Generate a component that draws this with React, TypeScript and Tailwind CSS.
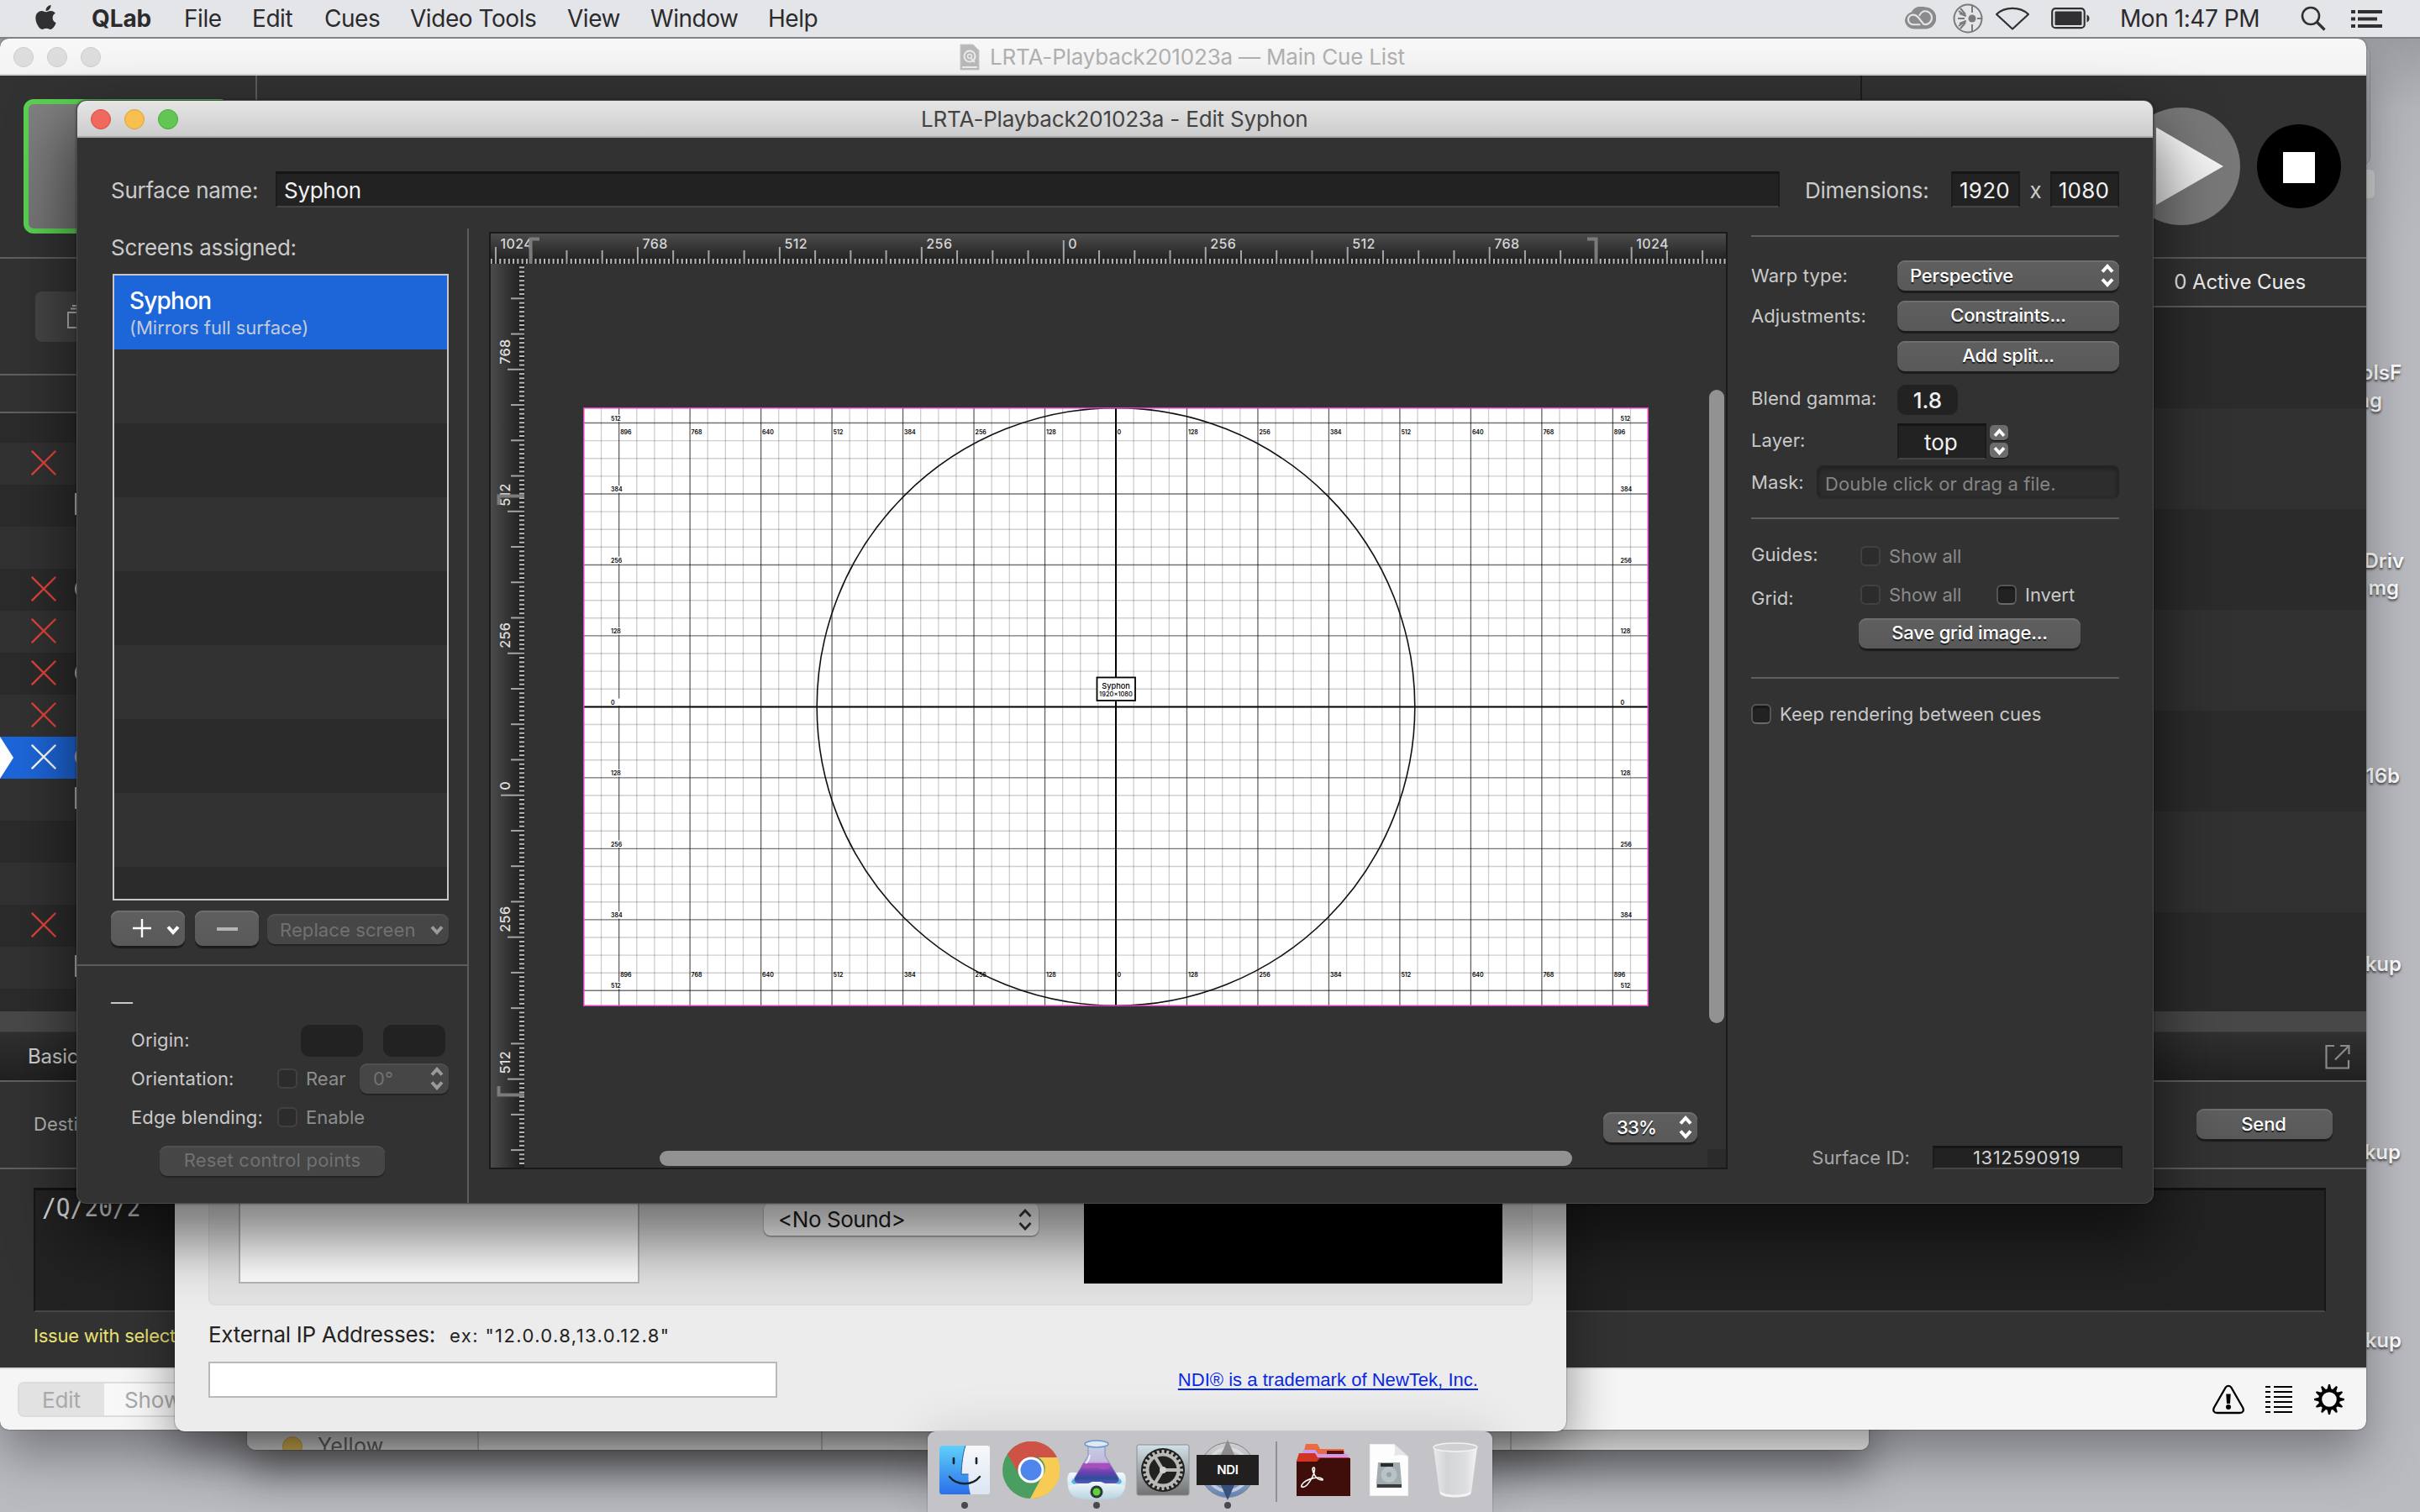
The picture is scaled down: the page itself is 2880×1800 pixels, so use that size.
import type { ReactNode } from "react";
import { FaApple } from "react-icons/fa";

const BTN =
  "flex items-center justify-center rounded-[9px] bg-gradient-to-b from-[#5f5f5f] to-[#595959] text-[22px] font-medium leading-none tracking-[-0.15px] text-white shadow-[0_3px_1px_rgba(0,0,0,0.45),inset_0_2px_0_#6e6e6e] [text-shadow:0_2px_1px_rgba(0,0,0,0.7)]";
const BTN_OFF =
  "flex items-center rounded-[9px] bg-[#464646] text-[22px] leading-none tracking-[0.1px] text-[#717171] shadow-[0_2px_1px_rgba(0,0,0,0.3),inset_0_2px_0_#505050]";
const FIELD =
  "flex items-center bg-[#222222] border-t-[3px] border-t-[#151515] border-b-2 border-b-[#454545] border-x-2 border-x-[#1b1b1b] leading-none text-[#f2f2f2]";
const LABEL = "text-[22px] leading-none tracking-[0.1px] text-[#c9c9c9] whitespace-pre";

/* ---------- small controls ---------- */

function UpDown({ color = "#ffffff" }: { color?: string }) {
  return (
    <svg viewBox="0 0 16 28" className="h-[28px] w-[16px] shrink-0" fill="none" stroke={color} strokeWidth="4">
      <path d="M2 9.500 8 3l6 6.500M2 18.500 8 25l6-6.500" />
    </svg>
  );
}

function Down({ color = "#ffffff" }: { color?: string }) {
  return (
    <svg viewBox="0 0 16 12" className="h-[12px] w-[16px] shrink-0" fill="none" stroke={color} strokeWidth="4">
      <path d="M2 2.500 8 9l6-6.500" />
    </svg>
  );
}

function Check({ off = false }: { off?: boolean }) {
  return (
    <span
      className={
        off
          ? "h-[24px] w-[24px] shrink-0 rounded-[6px] border-2 border-[#414141] bg-[#2c2c2c]"
          : "h-[24px] w-[24px] shrink-0 rounded-[6px] border-2 border-[#555555] border-b-[#6a6a6a] bg-[#222222] shadow-[inset_0_3px_2px_#171717]"
      }
    />
  );
}

/* ---------- menu bar ---------- */

function MenuBar() {
  return (
    <header className="absolute inset-x-0 top-0 z-50 flex h-[46px] items-center border-b-2 border-[#808184] bg-[#e4e5e8] text-[28px] leading-none tracking-[-0.45px] text-[#2b2b2d]">
      <div className="flex w-[109px] pl-[40px]">
        <FaApple className="mt-[-4px] h-[33px] w-[29px] text-[#303032]" />
      </div>
      <span className="w-[110px] font-bold tracking-[-0.1px]">QLab</span>
      <span className="w-[81px]">File</span>
      <span className="w-[86px]">Edit</span>
      <span className="w-[102px]">Cues</span>
      <span className="w-[187px]">Video Tools</span>
      <span className="w-[99px]">View</span>
      <span className="w-[140px]">Window</span>
      <span>Help</span>
      <div className="ml-auto flex items-center pr-[45px]">
        <svg viewBox="0 0 40 30" className="mr-[20px] h-[29px] w-[39px]">
          <path d="M13 27.500a12 10.800 0 0 1-3-21A13.500 13 0 0 1 27 .5a13.300 13.300 0 0 1 0 27z" fill="#8b8b8d" />
          <path
            d="M20 22h-8a6 6 0 0 1 0-12c3 0 5 1.500 7 4l6 7.500c5 1.500 10-2.500 10-8S30 5 26 5.500c-3 .5-5 2.500-6 5"
            fill="none"
            stroke="#e4e5e8"
            strokeWidth="2.200"
            strokeLinecap="round"
          />
        </svg>
        <svg viewBox="0 0 36 36" className="mr-[14px] h-[36px] w-[36px]" fill="none" stroke="#7a7a7c" strokeWidth="2">
          <circle cx="18" cy="18" r="16.500" />
          <path d="M23 2v9M23 25v9M29 18h6M14 18H6M15 15 7 9M15 21l-8 6M15 13 9 6M15 23l-6 7" />
          <path d="M16 15l-8-3M16 21l-8 3" />
          <circle cx="23" cy="18" r="4.500" fill="#7a7a7c" stroke="none" />
        </svg>
        <svg viewBox="0 0 42 28" className="mr-[25px] h-[28px] w-[42px]" fill="none" stroke="#303032" strokeWidth="2.200">
          <path d="M2 9C12-.5 30-.5 40 9L21 26.500z" strokeLinejoin="round" />
        </svg>
        <svg viewBox="0 0 47 26" className="mr-[35px] h-[26px] w-[47px]">
          <rect x="1.200" y="1.200" width="38.500" height="23" rx="4" fill="none" stroke="#303032" strokeWidth="2.200" />
          <rect x="4.500" y="4.500" width="32" height="16.500" rx="1" fill="#303032" />
          <path d="M42.500 8.500c4 1 4 8 0 9z" fill="#303032" />
        </svg>
        <span className="w-[215px]">Mon 1:47 PM</span>
        <svg viewBox="0 0 30 30" className="mr-[30px] h-[30px] w-[30px]" fill="none" stroke="#303032" strokeWidth="2.600">
          <circle cx="12" cy="12" r="10" />
          <path d="m19 19 9.500 9.500" strokeWidth="3.200" />
        </svg>
        <svg viewBox="0 0 37 21" className="h-[21px] w-[37px]" fill="#303032">
          <path d="M0 0h5v4H0zM0 8.500h5v4H0zM0 17h5v4H0zM8 0h29v4H8zM8 8.500h23v4H8zM8 17h29v4H8z" />
        </svg>
      </div>
    </header>
  );
}

/* ---------- desktop labels peeking out behind the windows ---------- */

function DesktopLabels() {
  const cls =
    "absolute right-0 w-[80px] text-right text-[24px] font-semibold leading-[34px] text-white [text-shadow:0_2px_3px_rgba(0,0,0,0.7)]";
  return (
    <>
      <div className="absolute left-[2700px] top-[54px] h-[143px] w-[121px] rounded-[10px] border border-[#8f9094] bg-[#a9aaad]" />
      <div className="absolute left-[2700px] top-[202px] h-[34px] w-[126px] rounded-[6px] bg-[#cbcccd]" />
      <div className={cls + " top-[427px] pr-[22px]"}>olsF</div>
      <div className={cls + " top-[460px] pr-[45px]"}>ng</div>
      <div className={cls + " top-[651px] pr-[19px]"}>Driv</div>
      <div className={cls + " top-[683px] pr-[25px]"}>mg</div>
      <div className={cls + " top-[907px] pr-[24px]"}>16b</div>
      <div className={cls + " top-[1131px] pr-[22px]"}>kup</div>
      <div className={cls + " top-[1355px] pr-[23px]"}>kup</div>
      <div className={cls + " top-[1579px] pr-[22px]"}>kup</div>
    </>
  );
}

/* ---------- finder window ---------- */

function FinderWindow() {
  return (
    <section className="absolute left-[294px] top-[1500px] flex h-[226px] w-[1930px] items-end overflow-hidden rounded-[10px] bg-[#f0f0f0] shadow-[0_0_2px_rgba(0,0,0,0.5),0_30px_50px_rgba(0,0,0,0.36)]">
      <div className="flex h-[24px] w-[276px] items-start border-r-2 border-[#c4c4c4] bg-gradient-to-b from-[#e0e0e0] to-[#eaeaea] pl-[42px]">
        <span className="mt-[8px] h-[24px] w-[24px] rounded-full border border-[#cfa945] bg-[#edc55c]" />
        <span className="ml-[18px] mt-[7px] text-[25px] leading-none tracking-[0.3px] text-[#6a6a6a]">Yellow</span>
      </div>
      <div className="h-[24px] w-[409px] border-r-2 border-[#c4c4c4] bg-gradient-to-b from-[#e6e6e6] to-[#f4f4f4]" />
      <div className="h-[24px] w-[820px] border-r-2 border-[#c4c4c4] bg-gradient-to-b from-[#e6e6e6] to-[#f4f4f4]" />
      <div className="h-[24px] flex-1 bg-gradient-to-b from-[#e6e6e6] to-[#f6f6f6]" />
    </section>
  );
}

/* ---------- main QLab window ---------- */

type CueKind = "x" | "box" | "circle" | "none";
const CUES: { x?: boolean; kind: CueKind; tone: string }[] = [
  { kind: "none", tone: "h-[35px] bg-[#2b2b2b]" },
  { x: true, kind: "none", tone: "h-[50px] bg-[#323232]" },
  { kind: "box", tone: "h-[50px] bg-[#2b2b2b]" },
  { kind: "none", tone: "h-[50px] bg-[#323232]" },
  { x: true, kind: "circle", tone: "h-[50px] bg-[#2b2b2b]" },
  { x: true, kind: "none", tone: "h-[50px] bg-[#323232]" },
  { x: true, kind: "circle", tone: "h-[50px] bg-[#2b2b2b]" },
  { x: true, kind: "none", tone: "h-[50px] bg-[#323232]" },
  { x: true, kind: "circle", tone: "h-[50px] bg-[#1d66da]" },
  { kind: "box", tone: "h-[50px] bg-[#323232]" },
  { kind: "none", tone: "h-[50px] bg-[#2b2b2b]" },
  { kind: "none", tone: "h-[50px] bg-[#323232]" },
  { x: true, kind: "none", tone: "h-[50px] bg-[#2b2b2b]" },
  { kind: "box", tone: "h-[50px] bg-[#323232]" },
  { kind: "none", tone: "h-[27px] bg-[#2b2b2b]" },
];

function CueRow({ x, kind, tone }: { x?: boolean; kind: CueKind; tone: string }) {
  const active = tone.includes("1d66da");
  return (
    <div className={"relative flex shrink-0 items-center pb-[2px] pl-[37px] " + tone}>
      {active && (
        <svg viewBox="0 0 16 50" className="absolute left-0 top-0 h-[50px] w-[16px]">
          <path d="M0 0 16 25 0 50z" fill="#ffffff" />
        </svg>
      )}
      <span className="flex w-[52px]">
        {x && (
          <svg
            viewBox="0 0 30 30"
            className="h-[30px] w-[30px]"
            stroke={active ? "#ffffff" : "#e0443c"}
            strokeWidth="2.300"
          >
            <path d="M.8.8 29.200 29.200M29.200.8.8 29.200" />
          </svg>
        )}
      </span>
      {kind === "circle" && <span className="h-[26px] w-[26px] rounded-full border-[3px] border-[#c8c8c8]" />}
      {kind === "box" && <span className="mt-[-2px] h-[26px] w-[26px] border-[3px] border-[#c8c8c8]" />}
    </div>
  );
}

function MainWindow() {
  return (
    <section className="absolute left-0 top-[46px] flex h-[1656px] w-[2816px] flex-col overflow-hidden rounded-[10px] bg-[#323232] shadow-[0_0_2px_rgba(0,0,0,0.5),0_30px_60px_rgba(0,0,0,0.35)]">
      <div className="relative flex h-[44px] shrink-0 items-center border-b-2 border-[#d2d2d2] bg-gradient-to-b from-[#f8f8f8] to-[#f3f3f3] pl-[16px] pt-[2px]">
        <span className="h-[24px] w-[24px] rounded-full border border-[#cbcbcb] bg-[#dddddd]" />
        <span className="ml-[16px] h-[24px] w-[24px] rounded-full border border-[#cbcbcb] bg-[#dddddd]" />
        <span className="ml-[16px] h-[24px] w-[24px] rounded-full border border-[#cbcbcb] bg-[#dddddd]" />
        <svg viewBox="0 0 26 32" className="ml-[1021px] h-[32px] w-[26px]">
          <path d="M2 1h15l7 7v23H2z" fill="#b9b9b9" stroke="#c8c8c8" />
          <circle cx="13" cy="15" r="6.500" fill="none" stroke="#ececec" strokeWidth="2" />
          <circle cx="13" cy="15" r="2.500" fill="none" stroke="#ececec" strokeWidth="1.500" />
          <path d="m15 18 4 4M4 28h18" stroke="#ececec" strokeWidth="2" />
        </svg>
        <span className="ml-[11px] whitespace-pre text-[26px] leading-none tracking-[-0.18px] text-[#b0b0b0]">
          LRTA-Playback201023a — Main Cue List
        </span>
      </div>

      <div className="flex h-[218px] shrink-0 border-b-2 border-[#606060]">
        <div className="w-[306px] border-r-2 border-[#5c5c5c] pl-[28px] pt-[28px]">
          <div className="h-[160px] w-[246px] rounded-[12px] border-[6px] border-[#5bd052] bg-gradient-to-br from-[#808080] to-[#6a6a6a]" />
        </div>
        <div className="ml-auto flex w-[602px] items-center justify-end border-l-2 border-[#1c1c1c] pr-[30px]">
          <svg viewBox="0 0 140 140" className="mr-[20px] h-[140px] w-[140px]">
            <defs>
              <linearGradient id="play" x1="0" x2="0" y1="0" y2="1">
                <stop offset="0" stopColor="#ffffff" />
                <stop offset="1" stopColor="#e2e2e2" />
              </linearGradient>
            </defs>
            <circle cx="70" cy="70" r="70" fill="#787878" />
            <path d="M40 23.500 120 70 40 116z" fill="url(#play)" />
          </svg>
          <span className="flex h-[100px] w-[100px] items-center justify-center rounded-full bg-black pt-[2px]">
            <span className="h-[37px] w-[38px] bg-white" />
          </span>
        </div>
      </div>

      <div className="flex h-[896px] shrink-0">
        <div className="flex flex-1 flex-col">
          <div className="flex h-[139px] shrink-0 items-center border-b-2 border-[#606060] pl-[42px]">
            <div className="flex h-[60px] w-[100px] items-center rounded-[8px] bg-[#454545] pl-[36px]">
              <svg viewBox="0 0 30 30" className="h-[30px] w-[30px]" fill="none" stroke="#b5b5b5" strokeWidth="2">
                <path d="M3 10h24v18H3zM6 5.500h20M8 2h14" />
              </svg>
            </div>
          </div>
          <div className="h-[45px] shrink-0 border-b-2 border-[#606060]" />
          {CUES.map((c, i) => (
            <CueRow key={i} {...c} />
          ))}
        </div>
        <div className="flex w-[602px] flex-col">
          <div className="flex h-[58px] shrink-0 items-center justify-end border-b-2 border-[#606060] pr-[72px] text-[24px] leading-none tracking-[-0.1px] text-[#ececec]">
            0 Active Cues
          </div>
          <div className="h-[120px] bg-[#2b2b2b]" />
          <div className="h-[120px] bg-[#313131]" />
          <div className="h-[120px] bg-[#2b2b2b]" />
          <div className="h-[120px] bg-[#313131]" />
          <div className="h-[120px] bg-[#2b2b2b]" />
          <div className="h-[120px] bg-[#313131]" />
          <div className="flex-1 bg-[#2b2b2b]" />
        </div>
      </div>

      <div className="h-[25px] shrink-0 border-b border-[#3a3a3a] bg-[#484848]" />
      <div className="flex h-[59px] shrink-0 items-center justify-between border-b-2 border-[#606060] bg-gradient-to-b from-[#303030] to-[#212121] pl-[33px] pr-[19px]">
        <span className="text-[24px] leading-none tracking-[-0.2px] text-[#d0d0d0]">Basics</span>
        <svg viewBox="0 0 30 30" className="h-[30px] w-[30px]" fill="none" stroke="#8a8a8a" strokeWidth="2.200">
          <path d="M11 2H1.500v26.500H28V19M18 2h10.500v10M28.500 2 12 18.500" />
        </svg>
      </div>
      <div className="flex h-[104px] shrink-0 items-center justify-between border-b-2 border-[#606060] px-[40px] pb-[2px]">
        <span className="text-[22px] leading-none text-[#b8b8b8]">Destination:</span>
        <div className={BTN + " h-[36px] w-[162px] pb-[1px] pr-[2px]"}>Send</div>
      </div>
      <div className="flex min-h-0 flex-1 flex-col px-[40px]">
        <div className="mr-[8px] mt-[22px] flex h-[148px] shrink-0 border-x-2 border-b-2 border-t-[3px] border-x-[#161616] border-b-[#454545] border-t-[#121212] bg-[#222222] pl-[8px] pt-[5px]">
          <span className="origin-left scale-x-[0.93] font-['DejaVu_Sans_Mono'] text-[30px] leading-[32px] text-[#dcdcdc]">/Q/20/2</span>
        </div>
        <span className="mt-[15px] text-[22px] leading-[26px] tracking-[-0.25px] text-[#e9e173]">Issue with select</span>
      </div>
      <footer className="flex h-[74px] shrink-0 items-center border-t-2 border-[#dcdcdc] bg-[#f5f5f5] pl-[21px] pr-[26px] text-[26px] leading-none tracking-[-0.1px] text-[#a9a9a9]">
        <div className="flex h-[42px] w-[220px] overflow-hidden rounded-[8px] border-2 border-[#dcdcdc]">
          <span className="flex w-[101px] items-center bg-[#e2e2e2] pl-[27px] pt-[2px]">Edit</span>
          <span className="flex flex-1 items-center bg-[#f8f8f8] pl-[24px] pt-[2px]">Show</span>
        </div>
        <svg viewBox="0 0 38 36" className="ml-auto mr-[25px] h-[36px] w-[38px]">
          <path
            d="M15.500 4a4 4 0 0 1 7 0L36 27.500c2 4 0 6.500-3.500 6.500h-27C2 34 0 31.500 2 27.500z"
            fill="none"
            stroke="#000000"
            strokeWidth="2.300"
          />
          <path d="M16.300 11.500h5.400l-.7 11.500h-4z" />
          <circle cx="19" cy="27" r="3" />
        </svg>
        <svg viewBox="0 0 32 34" className="mr-[26px] h-[34px] w-[32px]">
          <path d="M0 1h6v2H0zM10 1h22v2H10zM0 7h6v2H0zM10 7h22v2H10zM0 13h6v2H0zM10 13h22v2H10zM0 19h6v2H0zM10 19h22v2H10zM0 25h6v2H0zM10 25h22v2H10zM0 31h6v2H0zM10 31h22v2H10z" />
        </svg>
        <svg viewBox="-18 -18 36 36" className="h-[36px] w-[36px]">
          <circle r="10.800" fill="none" stroke="#000000" strokeWidth="4" />
          {Array.from({ length: 12 }, (_, i) => (
            <path key={i} d="M-2.500-12 -1-18h2L2.500-12z" transform={`rotate(${i * 30})`} />
          ))}
        </svg>
      </footer>
    </section>
  );
}

/* ---------- NDI window ---------- */

function NdiWindow() {
  return (
    <section className="absolute left-[208px] top-[1300px] flex h-[404px] w-[1656px] flex-col rounded-[12px] bg-[#ececec] px-[40px] shadow-[0_0_2px_rgba(0,0,0,0.6),0_25px_60px_rgba(0,0,0,0.42)]">
      <div className="flex h-[254px] shrink-0 items-end rounded-b-[8px] border border-[#d8d8d8] bg-[#e3e3e3] pb-[25px] pl-[35px]">
        <div className="h-[200px] w-[477px] border-2 border-[#b6b6b6] bg-white" />
        <div className="mb-[57px] ml-[148px] flex h-[39px] w-[327px] items-center justify-between rounded-[8px] bg-white pl-[17px] pr-[8px] pt-[1px] text-[26px] leading-none tracking-[-0.45px] text-[#1c1c1c] shadow-[0_1px_2px_rgba(0,0,0,0.5)]">
          &lt;No Sound&gt;
          <svg viewBox="0 0 16 26" className="h-[26px] w-[16px]" fill="none" stroke="#3a3a3a" strokeWidth="2.800">
            <path d="M1.500 9 8 2l6.500 7M1.500 17 8 24l6.500-7" />
          </svg>
        </div>
        <div className="ml-[54px] h-[200px] w-[498px] bg-black" />
      </div>
      <div className="mt-[16px] flex h-[38px] shrink-0 items-center text-[#232323]">
        <span className="w-[287px] text-[26px] leading-none tracking-[-0.3px]">External IP Addresses:</span>
        <span className="mt-[2px] text-[22px] leading-none tracking-[1.400px]">ex: "12.0.0.8,13.0.12.8"</span>
      </div>
      <div className="mt-[13px] flex items-center justify-between">
        <div className="h-[43px] w-[677px] border-2 border-[#b9b9b9] bg-white" />
        <a className="mr-[65px] font-['Liberation_Sans'] text-[22px] leading-none tracking-[0.030px] text-[#0a28e0] underline decoration-2 underline-offset-[3px]">
          NDI® is a trademark of NewTek, Inc.
        </a>
      </div>
    </section>
  );
}

/* ---------- surface editor: rulers and test grid ---------- */

const STEP = 0.66;

function TopRuler() {
  const zero = 681.8;
  const ticks: ReactNode[] = [];
  const labels: ReactNode[] = [];
  for (let u = -1040; u <= 1200; u += 8) {
    const x = zero + u * STEP;
    if (x < 0 || x > 1470) continue;
    const h = u === 0 ? 28 : u % 256 === 0 ? 20 : u % 64 === 0 ? 16 : 6;
    ticks.push(<rect key={u} x={x - 1} y={36 - h} width={2} height={h} fill={h > 6 ? "#a5a5a5" : "#b9b9b9"} />);
    if (u % 256 === 0)
      labels.push(
        <text key={u} x={x + 5.5} y={18}>
          {Math.abs(u)}
        </text>,
      );
  }
  return (
    <svg viewBox="0 0 1470 36" className="h-[36px] w-[1470px] shrink-0">
      <defs>
        <linearGradient id="rt" x1="0" x2="0" y1="0" y2="1">
          <stop offset="0" stopColor="#4b4b4b" />
          <stop offset="1" stopColor="#1d1d1d" />
        </linearGradient>
      </defs>
      <rect width="1470" height="36" fill="url(#rt)" />
      {ticks}
      <g fill="#d6d6d6" fontSize="16" fontFamily="Inter, sans-serif" fontWeight="500" letterSpacing="0.4">
        {labels}
      </g>
      <path d="M58 6.500H47.500V36M1305 6.500h10.500V36" fill="none" stroke="#7b7b7b" strokeWidth="4" />
    </svg>
  );
}

function LeftRuler() {
  const zero = 632.7;
  const ticks: ReactNode[] = [];
  const labels: ReactNode[] = [];
  for (let u = -960; u <= 680; u += 8) {
    const y = zero + u * STEP;
    if (y < 0 || y > 1076) continue;
    const w = u === 0 ? 28 : u % 256 === 0 ? 20 : u % 64 === 0 ? 16 : 6;
    ticks.push(<rect key={u} y={y - 1} x={40 - w} height={2} width={w} fill={w > 6 ? "#a5a5a5" : "#b9b9b9"} />);
    if (u % 256 === 0)
      labels.push(
        <text key={u} transform={`translate(22.500 ${y - 6}) rotate(-90)`}>
          {Math.abs(u)}
        </text>,
      );
  }
  return (
    <svg viewBox="0 0 40 1076" className="h-[1076px] w-[40px] shrink-0">
      <defs>
        <linearGradient id="rl" x1="0" x2="1" y1="0" y2="0">
          <stop offset="0" stopColor="#4b4b4b" />
          <stop offset="1" stopColor="#1d1d1d" />
        </linearGradient>
      </defs>
      <rect width="40" height="1076" fill="url(#rl)" />
      {ticks}
      <g fill="#e0e0e0" fontSize="16" fontFamily="Inter, sans-serif" fontWeight="500" letterSpacing="0.4">
        {labels}
      </g>
      <path d="M9.500 287V276.500H40M9.500 979v10.500H40" fill="none" stroke="#7b7b7b" strokeWidth="4" />
    </svg>
  );
}

function TestGrid() {
  const cx = 634;
  const cy = 356.4;
  const lines: ReactNode[] = [];
  const labels: ReactNode[] = [];
  for (let u = -928; u <= 928; u += 32) {
    const x = cx + u * STEP;
    const major = u % 128 === 0;
    if (u !== 0)
      lines.push(<path key={"v" + u} d={`M${x} 0V713`} stroke="#000000" strokeOpacity={major ? 0.62 : 0.2} strokeWidth={1.3} />);
    if (major) {
      labels.push(
        <text key={"t" + u} x={x + 1.5} y={32}>
          {Math.abs(u)}
        </text>,
        <text key={"b" + u} x={x + 1.5} y={678}>
          {Math.abs(u)}
        </text>,
      );
    }
  }
  for (let u = -512; u <= 512; u += 32) {
    const y = cy + u * STEP;
    const major = u % 128 === 0;
    if (u !== 0)
      lines.push(<path key={"h" + u} d={`M0 ${y}H1268`} stroke="#000000" strokeOpacity={major ? 0.55 : 0.19} strokeWidth={1.4} />);
    if (major) {
      const ly = u === 512 ? y - 3.5 : y - 2.8;
      labels.push(
        <rect key={"p" + u} x={32} y={ly - 7} width={15} height={8.5} fill="#ffffff" />,
        <text key={"l" + u} x={33} y={ly}>
          {Math.abs(u)}
        </text>,
        <text key={"r" + u} x={1234.5} y={ly}>
          {Math.abs(u)}
        </text>,
      );
    }
  }
  return (
    <svg viewBox="0 0 1268 713" className="ml-[70px] mt-[171px] h-[713px] w-[1268px] shrink-0">
      <rect width="1268" height="713" fill="#ffffff" />
      {lines}
      <g fill="#000000" fontSize="7" fontFamily="Inter, sans-serif" fontWeight="600">
        {labels}
      </g>
      <path d="M634 0V713" stroke="#000000" strokeWidth="2" />
      <path d={`M0 ${cy}H1268`} stroke="#000000" strokeWidth="2" />
      <circle cx={cx} cy={cy} r="355.800" fill="none" stroke="#111111" strokeWidth="1.600" />
      <rect x="611.500" y="321.500" width="45.500" height="27.500" fill="#ffffff" stroke="#000000" strokeWidth="1.800" />
      <g fill="#000000" fontFamily="Inter, sans-serif" textAnchor="middle" fontWeight="500">
        <text x={cx} y="334.500" fontSize="9.200">
          Syphon
        </text>
        <text x={cx} y="343.800" fontSize="7.500">
          1920x1080
        </text>
      </g>
      <rect x=".75" y=".75" width="1266.500" height="711.500" fill="none" stroke="#e040c0" strokeWidth="1.500" />
    </svg>
  );
}

/* ---------- Edit Syphon dialog ---------- */

function ScreensColumn() {
  return (
    <div className="mt-[26px] flex w-[466px] flex-col border-r-2 border-[#5c5c5c]">
      <div className="flex h-[46px] shrink-0 items-center pl-[40px] text-[26px] leading-none tracking-[-0.3px] text-[#cbcbcb]">Screens assigned:</div>
      <div className="ml-[42px] mt-[8px] flex h-[746px] w-[400px] shrink-0 flex-col border-2 border-[#c6c6c6]">
        <div className="flex h-[88px] shrink-0 flex-col bg-[#1d66da] pl-[18px] pt-[16px]">
          <span className="text-[28px] font-medium leading-[28px] tracking-[-0.800px] text-white">Syphon</span>
          <span className="mt-[6px] text-[22px] leading-[24px] tracking-[-0.020px] text-[#c3cbd8]">(Mirrors full surface)</span>
        </div>
        <div className="h-[88px] bg-[#323232]" />
        <div className="h-[88px] bg-[#2b2b2b]" />
        <div className="h-[88px] bg-[#323232]" />
        <div className="h-[88px] bg-[#2b2b2b]" />
        <div className="h-[88px] bg-[#323232]" />
        <div className="h-[88px] bg-[#2b2b2b]" />
        <div className="h-[88px] bg-[#323232]" />
        <div className="flex-1 bg-[#2b2b2b]" />
      </div>
      <div className="mt-[12px] flex h-[42px] shrink-0 items-center pl-[40px]">
        <div className={BTN + " h-[42px] w-[88px] !justify-start gap-[18px] pl-[26px]"}>
          <svg viewBox="0 0 22 22" className="h-[22px] w-[22px]" stroke="#ffffff" strokeWidth="2.400">
            <path d="M11 0v22M0 11h22" />
          </svg>
          <span className="flex pt-[3px]">
            <Down />
          </span>
        </div>
        <div className={BTN + " ml-[12px] h-[42px] w-[76px]"}>
          <span className="mt-[2px] h-[4px] w-[25px] bg-[#b5b5b5]" />
        </div>
        <div className={BTN_OFF + " ml-[10px] mt-[2px] h-[36px] w-[216px] justify-between pl-[15px] pr-[6px] pt-[1px]"}>
          Replace screen
          <Down color="#9a9a9a" />
        </div>
      </div>
      <div className="mt-[22px] h-[2px] shrink-0 bg-[#5c5c5c]" />
      <div className="h-[70px] shrink-0 pl-[40px] pt-[27px] text-[26px] leading-[32px] text-[#c9c9c9]">—</div>
      <div className="flex h-[38px] shrink-0 items-center pl-[64px]">
        <span className={LABEL + " w-[202px] pb-[2px]"}>Origin:</span>
        <span className="h-[38px] w-[74px] rounded-[10px] bg-[#222222]" />
        <span className="ml-[24px] h-[38px] w-[74px] rounded-[10px] bg-[#222222]" />
      </div>
      <div className="mt-[8px] flex h-[36px] shrink-0 items-center pl-[64px]">
        <span className={LABEL + " w-[174px]"}>Orientation:</span>
        <Check off />
        <span className="ml-[10px] w-[64px] text-[22px] leading-none text-[#8e8e8e]">Rear</span>
        <div className={BTN_OFF + " h-[36px] w-[106px] justify-between pl-[16px] pr-[6px]"}>
          0°
          <UpDown color="#9a9a9a" />
        </div>
      </div>
      <div className="mt-[10px] flex h-[36px] shrink-0 items-center pl-[64px]">
        <span className={LABEL + " w-[174px]"}>Edge blending:</span>
        <Check off />
        <span className="ml-[10px] text-[22px] leading-none text-[#8e8e8e]">Enable</span>
      </div>
      <div className={BTN_OFF + " ml-[98px] mt-[16px] h-[36px] w-[268px] shrink-0 justify-center pb-[2px] !tracking-[0.200px]"}>Reset control points</div>
    </div>
  );
}

function Stage() {
  return (
    <div className="relative ml-[24px] mt-[30px] flex h-[1116px] w-[1474px] flex-col overflow-hidden border-2 border-[#1a1a1a] bg-[#323232]">
      <TopRuler />
      <div className="flex">
        <LeftRuler />
        <TestGrid />
      </div>
      <div className="absolute bottom-0 right-0 h-[22px] w-[22px] bg-[#2b2b2b]" />
      <div className="absolute right-[2px] top-[186px] h-[754px] w-[18px] rounded-full bg-[#929292]" />
      <div className="absolute bottom-[2px] left-[201px] h-[18px] w-[1086px] rounded-full bg-[#929292]" />
      <div className={BTN + " absolute right-[34px] top-[1046px] h-[36px] w-[112px] !justify-between !tracking-[-0.800px] pl-[16px] pr-[6px]"}>
        33%
        <UpDown />
      </div>
    </div>
  );
}

function SettingsColumn() {
  return (
    <div className="ml-[28px] flex w-[442px] flex-col pr-[4px] pt-[34px]">
      <div className="h-[2px] shrink-0 bg-[#5f5f5f]" />
      <div className="mt-[28px] flex h-[36px] items-center">
        <span className={LABEL + " w-[174px]"}>Warp type:</span>
        <div className={BTN + " h-[36px] w-[264px] !justify-between pl-[15px] pr-[6px]"}>
          Perspective
          <UpDown />
        </div>
      </div>
      <div className="mt-[12px] flex h-[36px] items-center">
        <span className={LABEL + " w-[174px]"}>Adjustments:</span>
        <div className={BTN + " h-[36px] w-[264px] pb-[2px] !tracking-[-0.250px]"}>Constraints...</div>
      </div>
      <div className={BTN + " ml-[174px] mt-[12px] h-[36px] w-[264px] pb-[2px] !tracking-[-0.250px]"}>Add split...</div>
      <div className="mt-[16px] flex h-[36px] items-center">
        <span className={LABEL + " w-[174px] pb-[4px]"}>Blend gamma:</span>
        <span className="flex h-[36px] w-[72px] items-center justify-center rounded-[10px] bg-[#222222] pt-[2px] text-[26px] font-medium leading-none text-[#f0f0f0]">
          1.8
        </span>
      </div>
      <div className="mt-[10px] flex h-[43px] items-center">
        <span className={LABEL + " w-[174px] pb-[3px]"}>Layer:</span>
        <span className={FIELD + " h-[43px] w-[106px] pl-[30px] pt-[2px] text-[26px]"}>top</span>
        <span className="ml-[4px] flex flex-col gap-[3px]">
          <span className="flex h-[18px] w-[22px] items-center justify-center rounded-[5px] bg-[#6c6c6c] shadow-[0_1px_1px_#111111]">
            <svg viewBox="0 0 16 12" className="h-[11px] w-[15px]" fill="none" stroke="#ffffff" strokeWidth="4">
              <path d="M2 9.500 8 3l6 6.500" />
            </svg>
          </span>
          <span className="flex h-[18px] w-[22px] items-center justify-center rounded-[5px] bg-[#6c6c6c] shadow-[0_1px_1px_#111111]">
            <svg viewBox="0 0 16 12" className="h-[11px] w-[15px]" fill="none" stroke="#ffffff" strokeWidth="4">
              <path d="M2 2.500 8 9l6-6.500" />
            </svg>
          </span>
        </span>
      </div>
      <div className="mt-[7px] flex h-[40px] items-center">
        <span className={LABEL + " w-[78px]"}>Mask:</span>
        <span className="flex h-[40px] w-[360px] items-center rounded-[8px] border-2 border-[#242424] border-b-[#2a2a2a] bg-[#2d2d2d] pl-[8px] pt-[3px] text-[22px] leading-none tracking-[0.100px] text-[#858585] shadow-[inset_0_2px_4px_#1f1f1f]">
          Double click or drag a file.
        </span>
      </div>
      <div className="mt-[22px] h-[2px] shrink-0 bg-[#5f5f5f]" />
      <div className="mt-[26px] flex h-[36px] items-center">
        <span className={LABEL + " w-[130px] pb-[4px]"}>Guides:</span>
        <Check off />
        <span className="ml-[10px] text-[22px] leading-none tracking-[-0.100px] text-[#8a8a8a]">Show all</span>
      </div>
      <div className="mt-[10px] flex h-[36px] items-center">
        <span className={LABEL + " w-[130px] pt-[8px]"}>Grid:</span>
        <Check off />
        <span className="ml-[10px] w-[128px] text-[22px] leading-none tracking-[-0.100px] text-[#8a8a8a]">Show all</span>
        <Check />
        <span className="ml-[10px] text-[22px] leading-none text-[#c9c9c9]">Invert</span>
      </div>
      <div className={BTN + " ml-[128px] mt-[10px] h-[36px] w-[264px] pb-[2px] !tracking-[-0.200px]"}>Save grid image...</div>
      <div className="mt-[34px] h-[2px] shrink-0 bg-[#5f5f5f]" />
      <div className="mt-[30px] flex h-[24px] items-center">
        <Check />
        <span className="ml-[10px] text-[22px] leading-none tracking-[-0.030px] text-[#c9c9c9]">Keep rendering between cues</span>
      </div>
      <div className="mb-[40px] mr-[-4px] mt-auto flex h-[28px] items-center justify-end">
        <span className="mr-[27px] text-[22px] leading-none tracking-[0.100px] text-[#a8a8a8]">Surface ID:</span>
        <span className={FIELD + " h-[28px] w-[226px] justify-center pb-[2px] pr-[2px] text-[22px] tracking-[0.600px] !text-[#d2d2d2]"}>1312590919</span>
      </div>
    </div>
  );
}

function EditDialog() {
  return (
    <section className="absolute left-[92px] top-[120px] flex h-[1312px] w-[2470px] flex-col rounded-[11px] bg-[#323232] shadow-[0_0_0_1px_#4a4a4a,0_0_3px_1px_rgba(0,0,0,0.5),0_36px_70px_10px_rgba(0,0,0,0.5)]">
      <div className="flex h-[44px] shrink-0 items-center rounded-t-[11px] border-b-2 border-[#a9a9a9] bg-gradient-to-b from-[#e6e6e6] to-[#cccccc] pl-[16px] pt-[2px]">
        <span className="h-[24px] w-[24px] rounded-full border border-[#dc4b42] bg-[#f0695f]" />
        <span className="ml-[16px] h-[24px] w-[24px] rounded-full border border-[#dda034] bg-[#f7bf4f]" />
        <span className="ml-[16px] h-[24px] w-[24px] rounded-full border border-[#46a935] bg-[#62c655]" />
        <span className="ml-[884px] text-[26px] leading-none tracking-[-0.170px] text-[#434343]">LRTA-Playback201023a - Edit Syphon</span>
      </div>
      <div className="mt-[40px] flex h-[42px] shrink-0 items-center pl-[40px] text-[26px] leading-none tracking-[-0.280px] text-[#cbcbcb]">
        <span className="w-[196px] pt-[3px]">Surface name:</span>
        <span className={FIELD + " h-[43px] w-[1790px] pl-[8px] pt-[2px]"}>Syphon</span>
        <span className="ml-[30px] w-[174px] pt-[3px]">Dimensions:</span>
        <span className={FIELD + " h-[43px] w-[82px] justify-center pr-[2px] pt-[2px] tracking-[0.300px]"}>1920</span>
        <span className="w-[36px] pl-[1px] pt-[4px] text-center">x</span>
        <span className={FIELD + " h-[43px] w-[82px] justify-center pr-[2px] pt-[2px] tracking-[0.300px]"}>1080</span>
      </div>
      <div className="flex min-h-0 flex-1">
        <ScreensColumn />
        <Stage />
        <SettingsColumn />
      </div>
    </section>
  );
}

/* ---------- dock ---------- */

function FinderIcon() {
  return (
    <svg viewBox="0 0 62 60" className="h-[60px] w-[62px]">
      <defs>
        <linearGradient id="fa" x1="0" x2="0" y1="0" y2="1">
          <stop offset="0" stopColor="#5fd0fa" />
          <stop offset="1" stopColor="#2a6fe8" />
        </linearGradient>
        <linearGradient id="fb" x1="0" x2="0" y1="0" y2="1">
          <stop offset="0" stopColor="#f8f8fa" />
          <stop offset="1" stopColor="#dbe6f4" />
        </linearGradient>
      </defs>
      <rect x="1" y="1" width="60" height="58" rx="3" fill="url(#fb)" />
      <path d="M32 1H4a3 3 0 0 0-3 3v52a3 3 0 0 0 3 3h34c-2-7-2.500-14-2.500-24H27C27.500 22 29 10 32 1z" fill="url(#fa)" />
      <path d="M32 1c-3 9-4.500 21-5 34h8.500" fill="none" stroke="#2a5f98" strokeWidth="1" />
      <path d="M18 16v6M45 16v6" stroke="#16222e" strokeWidth="2.600" strokeLinecap="round" />
      <path d="M13 38c9 11 27 11 36 0" fill="none" stroke="#16222e" strokeWidth="2.400" strokeLinecap="round" />
    </svg>
  );
}

function ChromeIcon() {
  return (
    <svg viewBox="-34 -34 68 68" className="h-[68px] w-[68px]">
      <circle r="34" fill="#4a9e62" />
      <path d="M-28-19A34 34 0 0 1 31-15H0A15 15 0 0 0-13 7z" fill="#cf5246" />
      <path d="M31-15A34 34 0 0 1-1 34L13 8A15 15 0 0 0 9-15z" fill="#f8cb55" />
      <circle r="15.500" fill="#ffffff" />
      <circle r="12.500" fill="#4f86ec" />
    </svg>
  );
}

function FlaskIcon() {
  return (
    <svg viewBox="0 0 72 72" className="h-[72px] w-[72px]">
      <defs>
        <linearGradient id="fl" x1="0" x2="0" y1="0" y2="1">
          <stop offset="0" stopColor="#c6d3e4" />
          <stop offset=".42" stopColor="#c3b8de" />
          <stop offset=".5" stopColor="#a058b8" />
          <stop offset=".68" stopColor="#6a3fae" />
          <stop offset=".82" stopColor="#2c4f9c" />
          <stop offset="1" stopColor="#7a5ac0" />
        </linearGradient>
        <linearGradient id="fs" x1="0" x2="0" y1="0" y2="1">
          <stop offset="0" stopColor="#f0f9fd" />
          <stop offset="1" stopColor="#b7d3e0" />
        </linearGradient>
      </defs>
      <path d="M5 39c-6 2-5 20 3 28 8 6 48 6 56 0 8-8 9-26 3-28-8 0-54 0-62 0z" fill="url(#fs)" />
      <path d="M8 46c4 12 52 12 56 0l2 4c-4 10-56 10-60 0z" fill="#55b8ea" />
      <path d="M26 5h20v14l5 8 11 18c3 6-4 10-26 10S7 51 10 45l11-18 5-8z" fill="url(#fl)" stroke="#7f90c0" strokeWidth="1" />
      <path d="M18 32c8 5 13-2 21 2 6 3 10 0 14-2l-2-4H20z" fill="#a84fbe" />
      <path d="M23 28c4-3 4-6 5-10" stroke="#eef4fb" strokeWidth="2" fill="none" />
      <ellipse cx="36" cy="5" rx="14" ry="4" fill="#dde9f5" stroke="#6d97c9" strokeWidth="1.500" />
      <path d="M2 55c10-4 17-3 24-3l5-2h10l5 2c7 0 14-1 24 3-1 9-5 16-34 16S3 64 2 55z" fill="url(#fs)" />
      <circle cx="36" cy="62" r="7.500" fill="#33373b" />
      <circle cx="36" cy="62" r="4.500" fill="#5ed334" />
    </svg>
  );
}

function PrefsIcon() {
  return (
    <svg viewBox="-32 -31 64 62" className="h-[62px] w-[64px]">
      <defs>
        <linearGradient id="sp" x1="0" x2="0" y1="0" y2="1">
          <stop offset="0" stopColor="#d0e2ea" />
          <stop offset=".5" stopColor="#a3a8ab" />
          <stop offset="1" stopColor="#727272" />
        </linearGradient>
      </defs>
      <rect x="-31" y="-30" width="62" height="60" rx="2" fill="url(#sp)" stroke="#8a8f92" />
      <circle r="26" fill="#222222" />
      {Array.from({ length: 24 }, (_, i) => (
        <rect key={i} x="-1.500" y="-24" width="3" height="5" fill="#b9b9b5" transform={`rotate(${i * 15})`} />
      ))}
      <circle r="18.500" fill="none" stroke="#b9b9b5" strokeWidth="4" />
      <path d="M0 0 17 0M0 0-9-15M0 0-9 15" stroke="#b9b9b5" strokeWidth="4" />
      <circle r="4" fill="#d0d0cc" />
    </svg>
  );
}

function NdiIcon() {
  return (
    <div className="relative flex h-[72px] w-[74px] items-center justify-center">
      <svg viewBox="0 0 74 72" className="absolute inset-0 h-[72px] w-[74px]">
        <defs>
          <linearGradient id="nd" x1="0" x2="0" y1="0" y2="1">
            <stop offset="0" stopColor="#cfcfcf" />
            <stop offset=".5" stopColor="#aab0b8" />
            <stop offset="1" stopColor="#5e82bb" />
          </linearGradient>
        </defs>
        <circle cx="37" cy="36" r="32.500" fill="url(#nd)" stroke="#7e8288" strokeWidth="1" />
        <circle cx="37" cy="36" r="25" fill="none" stroke="#e1e4e8" strokeWidth="4" strokeOpacity=".7" />
        <path d="M37 0 45 18H29z" fill="#8d8d8d" />
        <path d="M37 72 29 54h16z" fill="#37507c" />
      </svg>
      <span className="relative flex h-[36px] w-[74px] items-center justify-center bg-[#211f20] text-[15px] font-semibold leading-none tracking-[-0.3px] text-white">
        NDI
      </span>
    </div>
  );
}

function AcrobatFolder() {
  return (
    <svg viewBox="0 0 64 62" className="h-[62px] w-[64px]">
      <path d="M8 12 11 0h14l3 6h28l2 8z" fill="#ec6a3e" />
      <path d="M36 8h20v6H36z" fill="#541009" />
      <path d="M5 16 8 7h14l4 5h35v6z" fill="#c79cf2" />
      <path d="M0 20 3 11h19l3 5h38v8H0z" fill="#cf3521" />
      <path d="M0 21h24l4-4h36v45H0z" fill="#3f0d0a" />
      <path
        d="M6 51c4 2 9-4 13-12 3-7 3-11 1.500-11-2 0-2 4 1 9 2 4 6 6 9 6 2 0 0-3-5-3-6 0-14 3-17 6-2 2-3 4-2.500 5z"
        fill="none"
        stroke="#ffffff"
        strokeWidth="1.600"
      />
    </svg>
  );
}

function DiskDoc() {
  return (
    <svg viewBox="0 0 48 62" className="h-[62px] w-[48px]">
      <path d="M1 0h29l17 15v47H1z" fill="#fdfdfd" stroke="#d4d4d4" strokeWidth=".6" />
      <path d="M30 0c2 5 1 11 0 14 5-1 12-1 17 1z" fill="#e6e6e8" />
      <path d="M11 22h26l2 24v6H9v-6z" fill="#a2adb2" />
      <rect x="14" y="23" width="15" height="4" fill="#2b2b2b" />
      <circle cx="24" cy="36.500" r="9.500" fill="#b8c3c8" />
      <circle cx="24" cy="36.500" r="3" fill="#98a3a8" />
      <path d="M10 48h29v4H10z" fill="#3c3c3c" />
    </svg>
  );
}

function TrashIcon() {
  return (
    <svg viewBox="0 0 54 66" className="h-[66px] w-[54px]">
      <defs>
        <linearGradient id="tr" x1="0" x2="1" y1="0" y2="0">
          <stop offset="0" stopColor="#e9eaec" />
          <stop offset=".3" stopColor="#d3d4d7" />
          <stop offset=".75" stopColor="#dedfe1" />
          <stop offset="1" stopColor="#f4f4f5" />
        </linearGradient>
      </defs>
      <path d="M1 6 8 60c1 7 37 7 38 0L53 6z" fill="url(#tr)" />
      <ellipse cx="27" cy="6" rx="26" ry="5" fill="#cfd0d3" stroke="#f2f2f3" strokeWidth="1.500" />
      <path d="M9 58c4 6 32 6 36 0v3c-2 6-34 6-36 0z" fill="#f2f3f4" />
    </svg>
  );
}

function DockItem({ children, running = false, className = "" }: { children: ReactNode; running?: boolean; className?: string }) {
  return (
    <div className={"relative flex h-[96px] flex-col items-center justify-center pb-[5px] " + className}>
      {children}
      {running && <span className="absolute bottom-[4px] h-[8px] w-[8px] rounded-full bg-[#48494c]" />}
    </div>
  );
}

function Dock() {
  return (
    <nav className="absolute left-[1104px] top-[1704px] flex h-[96px] w-[672px] items-center rounded-t-[9px] bg-[#c3c3c8] pl-[13px] shadow-[0_0_2px_rgba(0,0,0,0.35),0_0_60px_rgba(0,0,0,0.12)]">
      <DockItem running className="w-[62px]"><FinderIcon /></DockItem>
      <DockItem className="ml-[13px] w-[70px]"><ChromeIcon /></DockItem>
      <DockItem running className="ml-[7px] w-[72px]"><FlaskIcon /></DockItem>
      <DockItem className="ml-[10px] w-[66px]"><PrefsIcon /></DockItem>
      <DockItem running className="ml-[7px] w-[74px]"><NdiIcon /></DockItem>
      <span className="ml-[20px] h-[72px] w-[2px] bg-[#909196]" />
      <DockItem className="ml-[23px] w-[64px]"><AcrobatFolder /></DockItem>
      <DockItem className="ml-[22px] w-[48px]"><DiskDoc /></DockItem>
      <DockItem className="ml-[28px] w-[54px]"><TrashIcon /></DockItem>
    </nav>
  );
}

export default function App() {
  return (
    <div className="relative h-[1800px] w-[2880px] overflow-hidden bg-[linear-gradient(to_bottom,#9c9da1_0px,#9c9da1_46px,#b4b5ba_130px,#babbc1_300px,#babbc1_100%)] font-['Inter',sans-serif]">
      <DesktopLabels />
      <FinderWindow />
      <MainWindow />
      <NdiWindow />
      <EditDialog />
      <Dock />
      <MenuBar />
    </div>
  );
}
